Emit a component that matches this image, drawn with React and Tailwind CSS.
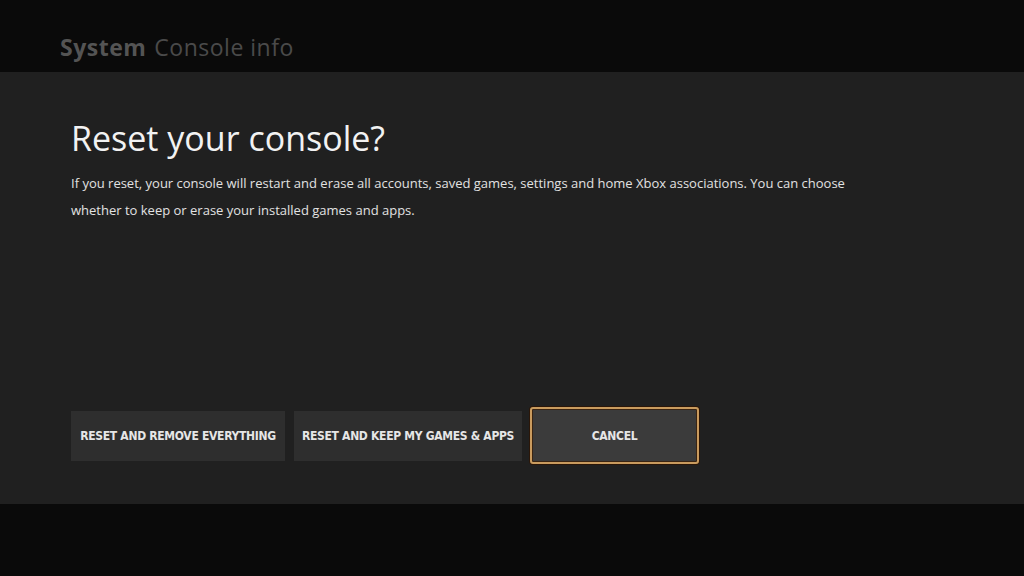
export default function App() {
  const btnFont = { fontFamily: '"DejaVu Sans Condensed", "Liberation Sans Narrow", sans-serif' };

  return (
    <div className="w-[1024px] h-[576px] flex flex-col bg-[#0a0a0a] overflow-hidden" style={{ fontFamily: '"Open Sans", "Liberation Sans", sans-serif' }}>
      {/* Header */}
      <div className="h-[72px] shrink-0 flex items-end pl-[60px] pb-[13px] tracking-[0.5px]">
        <span className="text-[23px] font-bold text-[#545454] leading-none">System</span>
        <span className="text-[23px] text-[#4a4a4a] leading-none ml-[8px]">Console info</span>
      </div>

      {/* Dialog panel */}
      <div className="h-[432px] shrink-0 bg-[#202020] flex flex-col pl-[71px] pt-[44px]">
        <h1 className="text-[34px] text-[#f2f2f2] leading-[44px]">Reset your console?</h1>
        <p className="mt-[10px] w-[800px] text-[13px] leading-[27px] text-[#e2e2e2]">
          If you reset, your console will restart and erase all accounts, saved games, settings and home Xbox associations. You can choose whether to keep or erase your installed games and apps.
        </p>

        <div className="mt-auto mb-[40px] flex items-center gap-[9px]">
          <button className="h-[50px] w-[214px] bg-[#2e2e2e] text-[12px] font-bold uppercase text-[#e6e6e6] tracking-tight" style={btnFont}>
            Reset and remove everything
          </button>
          <button className="h-[50px] w-[228px] bg-[#2e2e2e] text-[12px] font-bold uppercase text-[#e6e6e6] tracking-tight" style={btnFont}>
            Reset and keep my games &amp; apps
          </button>
          <button className="h-[57px] w-[169px] -ml-[1px] rounded-[3px] border-2 border-[#c99b5e] bg-[#3b3b3b] text-[12px] font-bold uppercase text-[#e6e6e6] tracking-tight shadow-[0_0_0_1px_#2a1608,inset_0_0_0_1px_#3a2412]" style={btnFont}>
            Cancel
          </button>
        </div>
      </div>
    </div>
  );
}
